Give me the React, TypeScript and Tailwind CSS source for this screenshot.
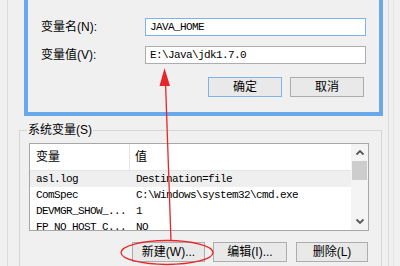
const cjk = "font-['Liberation_Sans','Noto_Sans_CJK_SC',sans-serif]"
const mono = "font-['Liberation_Mono','Noto_Sans_CJK_SC',monospace] text-[11px] tracking-[-0.6px]"

const rows = [
  { name: "asl.log", value: "Destination=file", active: true },
  { name: "ComSpec", value: "C:\\Windows\\system32\\cmd.exe" },
  { name: "DEVMGR_SHOW_...", value: "1" },
  { name: "FP_NO_HOST_C...", value: "NO" },
]

function Button({ label, w, primary }: { label: string; w: string; primary?: boolean }) {
  return (
    <div
      className={`flex h-[20px] shrink-0 items-center justify-center border bg-[#e9e9e9] text-[12px] leading-none ${w} ${
        primary ? "border-[#7eb4ea]" : "border-[#adadad]"
      }`}
    >
      {label}
    </div>
  )
}

function Chevron({ up }: { up?: boolean }) {
  return (
    <svg width="10" height="7" viewBox="0 0 10 7">
      <path
        d={up ? "M1.5 5.5 L5 2 L8.5 5.5" : "M1.5 1.5 L5 5 L8.5 1.5"}
        fill="none"
        stroke="#5a5a5a"
        strokeWidth="1.8"
      />
    </svg>
  )
}

export default function App() {
  return (
    <div className={`relative h-[266px] w-[400px] overflow-hidden bg-[#f0f0f0] text-black ${cjk}`}>
      <div className="flex h-full">
        {/* outer window edge, left */}
        <div className="w-[8px] shrink-0 border-r border-[#dadada]" />
        <div className="w-[11px] shrink-0" />

        <div className="flex w-[365px] shrink-0 flex-col">
          {/* new-variable dialog (blue frame) */}
          <div className="ml-[5px] h-[116px] w-[359px] shrink-0 border-x-4 border-b-4 border-[#6aa8ec] bg-[#f0f0f0]">
            <div className="flex flex-col pr-[13px] pt-[18px]">
              <div className="flex h-[18px] items-center">
                <span className="w-[117px] pl-[13px] text-[12px] leading-none">变量名(N):</span>
                <div className={`flex h-[18px] w-[221px] items-center border border-[#7eb4ea] bg-white pl-[4px] ${mono}`}>
                  JAVA_HOME
                </div>
              </div>
              <div className="mt-[10px] flex h-[18px] items-center">
                <span className="w-[117px] pl-[13px] text-[12px] leading-none">变量值(V):</span>
                <div className={`flex h-[18px] w-[221px] items-center border border-[#abadb3] bg-white pl-[4px] ${mono}`}>
                  E:\Java\jdk1.7.0
                </div>
              </div>
              <div className="mt-[13px] flex justify-end gap-[8px] pr-[2px]">
                <Button label="确定" w="w-[74px]" primary />
                <Button label="取消" w="w-[74px]" />
              </div>
            </div>
          </div>

          {/* system variables group */}
          <div className="relative mt-[14px] h-[160px] w-[363px] shrink-0 border border-[#d5d5d5]">
            <span className="absolute -top-[9px] left-[7px] bg-[#f0f0f0] px-[1px] text-[12px] leading-[16px]">
              系统变量(S)
            </span>

            <div className="ml-[9px] mt-[12px] flex h-[88px] w-[340px] border border-[#a7a7a7] bg-white">
              <div className="flex w-[321px] flex-col overflow-hidden">
                <div className="flex h-[27px] shrink-0 border-b border-[#e5e5e5]">
                  <div className="flex w-[100px] items-center border-r border-[#e5e5e5] pl-[6px] text-[12px]">变量</div>
                  <div className="flex items-center pl-[5px] text-[12px]">值</div>
                </div>
                {rows.map((r) => (
                  <div key={r.name} className={`flex h-[16px] shrink-0 items-center ${r.active ? "bg-[#efefef]" : ""} ${mono}`}>
                    <span className="w-[100px] shrink-0 pl-[6px]">{r.name}</span>
                    <span className="whitespace-nowrap pl-[6px]">{r.value}</span>
                  </div>
                ))}
              </div>
              <div className="flex w-[17px] flex-col bg-[#f4f4f4]">
                <div className="flex h-[17px] shrink-0 items-center justify-center">
                  <Chevron up />
                </div>
                <div className="mx-[1px] h-[19px] shrink-0 bg-[#cdcdcd]" />
                <div className="flex-1" />
                <div className="flex h-[17px] shrink-0 items-center justify-center">
                  <Chevron />
                </div>
              </div>
            </div>

            <div className="mt-[11px] flex justify-end pr-[13px]">
              <Button label="新建(W)..." w="w-[73px]" />
              <div className="w-[8px]" />
              <Button label="编辑(I)..." w="w-[74px]" />
              <div className="w-[9px]" />
              <Button label="删除(L)" w="w-[72px]" />
            </div>
          </div>
        </div>

        {/* outer window edges, right */}
        <div className="w-[5px] shrink-0 border-r border-[#dadada]" />
        <div className="w-[5px] shrink-0 border-r border-[#e2e2e2]" />
      </div>

      {/* red annotation */}
      <svg className="pointer-events-none absolute left-0 top-0" width="400" height="266" viewBox="0 0 400 266">
        <line x1="165.5" y1="82" x2="171" y2="241" stroke="#e8262a" strokeWidth="1.3" />
        <polygon points="164.5,68 159.5,86 170,86" fill="#e8262a" />
        <ellipse cx="167" cy="252.5" rx="46" ry="12" fill="none" stroke="#e8262a" strokeWidth="1.3" />
      </svg>
    </div>
  )
}
